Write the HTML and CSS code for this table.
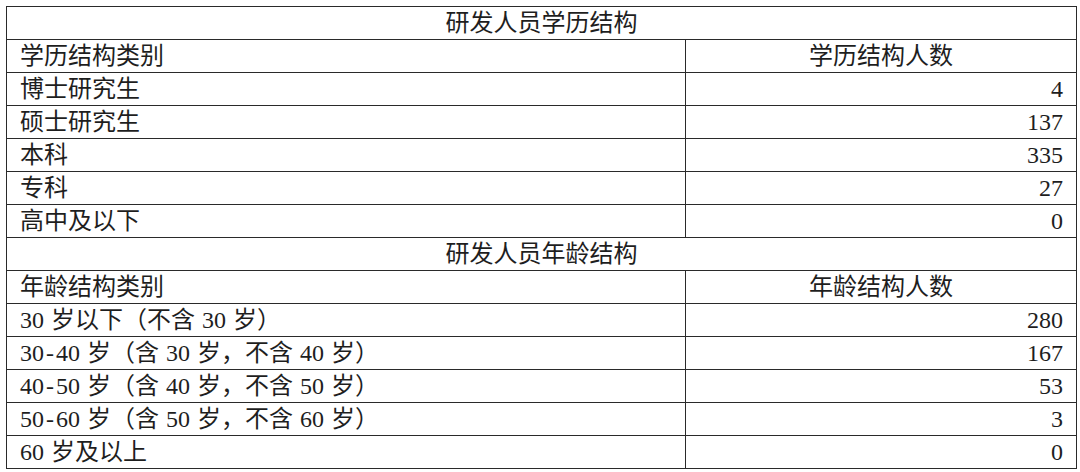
FILE: index.html
```html
<!DOCTYPE html>
<html lang="zh-CN">
<head>
<meta charset="utf-8">
<title>研发人员结构</title>
<link rel="stylesheet" href="styles.css">
</head>
<body>
<table class="stats">
  <colgroup><col class="col-label"><col class="col-value"></colgroup>
  <tbody>
    <tr><td class="title" colspan="2">研发人员学历结构</td></tr>
    <tr><td>学历结构类别</td><td class="head">学历结构人数</td></tr>
    <tr><td>博士研究生</td><td class="num">4</td></tr>
    <tr><td>硕士研究生</td><td class="num">137</td></tr>
    <tr><td>本科</td><td class="num">335</td></tr>
    <tr><td>专科</td><td class="num">27</td></tr>
    <tr><td>高中及以下</td><td class="num">0</td></tr>
    <tr><td class="title" colspan="2">研发人员年龄结构</td></tr>
    <tr><td>年龄结构类别</td><td class="head">年龄结构人数</td></tr>
    <tr><td>30 岁以下（不含 30 岁）</td><td class="num">280</td></tr>
    <tr><td>30<span class="dash">-</span>40 岁（含 30 岁，不含 40 岁）</td><td class="num">167</td></tr>
    <tr><td>40<span class="dash">-</span>50 岁（含 40 岁，不含 50 岁）</td><td class="num">53</td></tr>
    <tr><td>50<span class="dash">-</span>60 岁（含 50 岁，不含 60 岁）</td><td class="num">3</td></tr>
    <tr><td>60 岁及以上</td><td class="num">0</td></tr>
  </tbody>
</table>
</body>
</html>
```
FILE: styles.css
```css
html, body {
  margin: 0;
  padding: 0;
  background: #ffffff;
}
body {
  padding: 6px 0 0 6px;
  font-family: "Liberation Serif", "Noto Sans CJK SC", serif;
  color: #1e1e1e;
}
.stats {
  border-collapse: collapse;
  width: 1071px;
  table-layout: fixed;
  font-size: 24px;
  word-spacing: 1px;
}
.col-label { width: 679px; }
.stats td {
  border: 1px solid #2a2a2a;
  height: 32px;
  padding: 0 13px;
  line-height: 32px;
  white-space: nowrap;
  box-sizing: border-box;
}
.stats td.title,
.stats td.head { text-align: center; }
.stats td.num { text-align: right; }
.dash {
  display: inline-block;
  width: 12px;
  text-align: center;
}
```
